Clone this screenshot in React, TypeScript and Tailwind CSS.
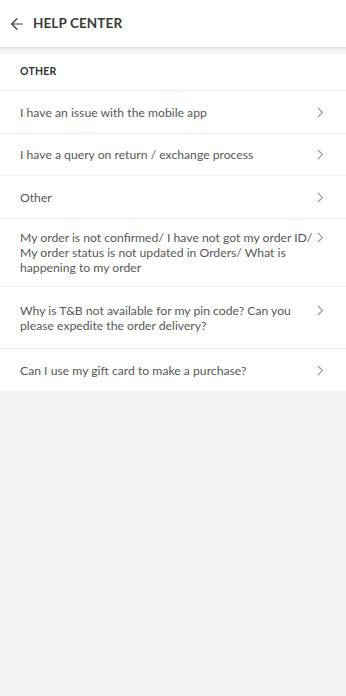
import { ArrowLeft } from "lucide-react";

const topics = [
  { label: "I have an issue with the mobile app", pad: "py-[13.5px]" },
  { label: "I have a query on return / exchange process", pad: "py-[13px]" },
  { label: "Other", pad: "py-[13.5px]" },
  {
    label: "My order is not confirmed/ I have not got my order ID/ My order status is not updated in Orders/ What is happening to my order",
    pad: "py-[11px]",
  },
  {
    label: "Why is T&B not available for my pin code? Can you please expedite the order delivery?",
    pad: "py-[15.5px]",
  },
  { label: "Can I use my gift card to make a purchase?", pad: "py-[13.5px]" },
];

function Chevron() {
  return (
    <svg viewBox="0 0 7 11" className="mt-[2px] h-[11px] w-[7px] shrink-0 text-[#999]" fill="none">
      <path d="M1 1l4.5 4.5L1 10" stroke="currentColor" strokeWidth="1.1" />
    </svg>
  );
}

export default function App() {
  return (
    <div className="min-h-[696px] bg-[#f3f3f3] font-['Lato','Liberation_Sans',sans-serif]">
      <header className="flex h-[47px] items-center gap-[7px] bg-white pl-[8px] shadow-[0_1px_2px_rgba(0,0,0,0.12)]">
        <ArrowLeft className="h-[18px] w-[18px] text-[#3a3a3a]" strokeWidth={1.6} />
        <h1 className="text-[13.5px] font-bold tracking-[0.1px] text-[#3a3a3a]">HELP CENTER</h1>
      </header>

      <section className="mt-[7px] bg-white">
        <div className="flex h-[37px] items-center border-b border-[#efefef] px-5">
          <h2 className="text-[10.5px] font-bold tracking-[0.2px] text-[#333]">OTHER</h2>
        </div>
        <ul>
          {topics.map((t, i) => (
            <li
              key={t.label}
              className={`flex items-start justify-between gap-[2px] pl-5 pr-[22px] ${t.pad} ${
                i < topics.length - 1 ? "border-b border-[#efefef]" : ""
              }`}
            >
              <span className="text-[12.2px] leading-[15px] text-[#585858]">{t.label}</span>
              <Chevron />
            </li>
          ))}
        </ul>
      </section>
    </div>
  );
}
